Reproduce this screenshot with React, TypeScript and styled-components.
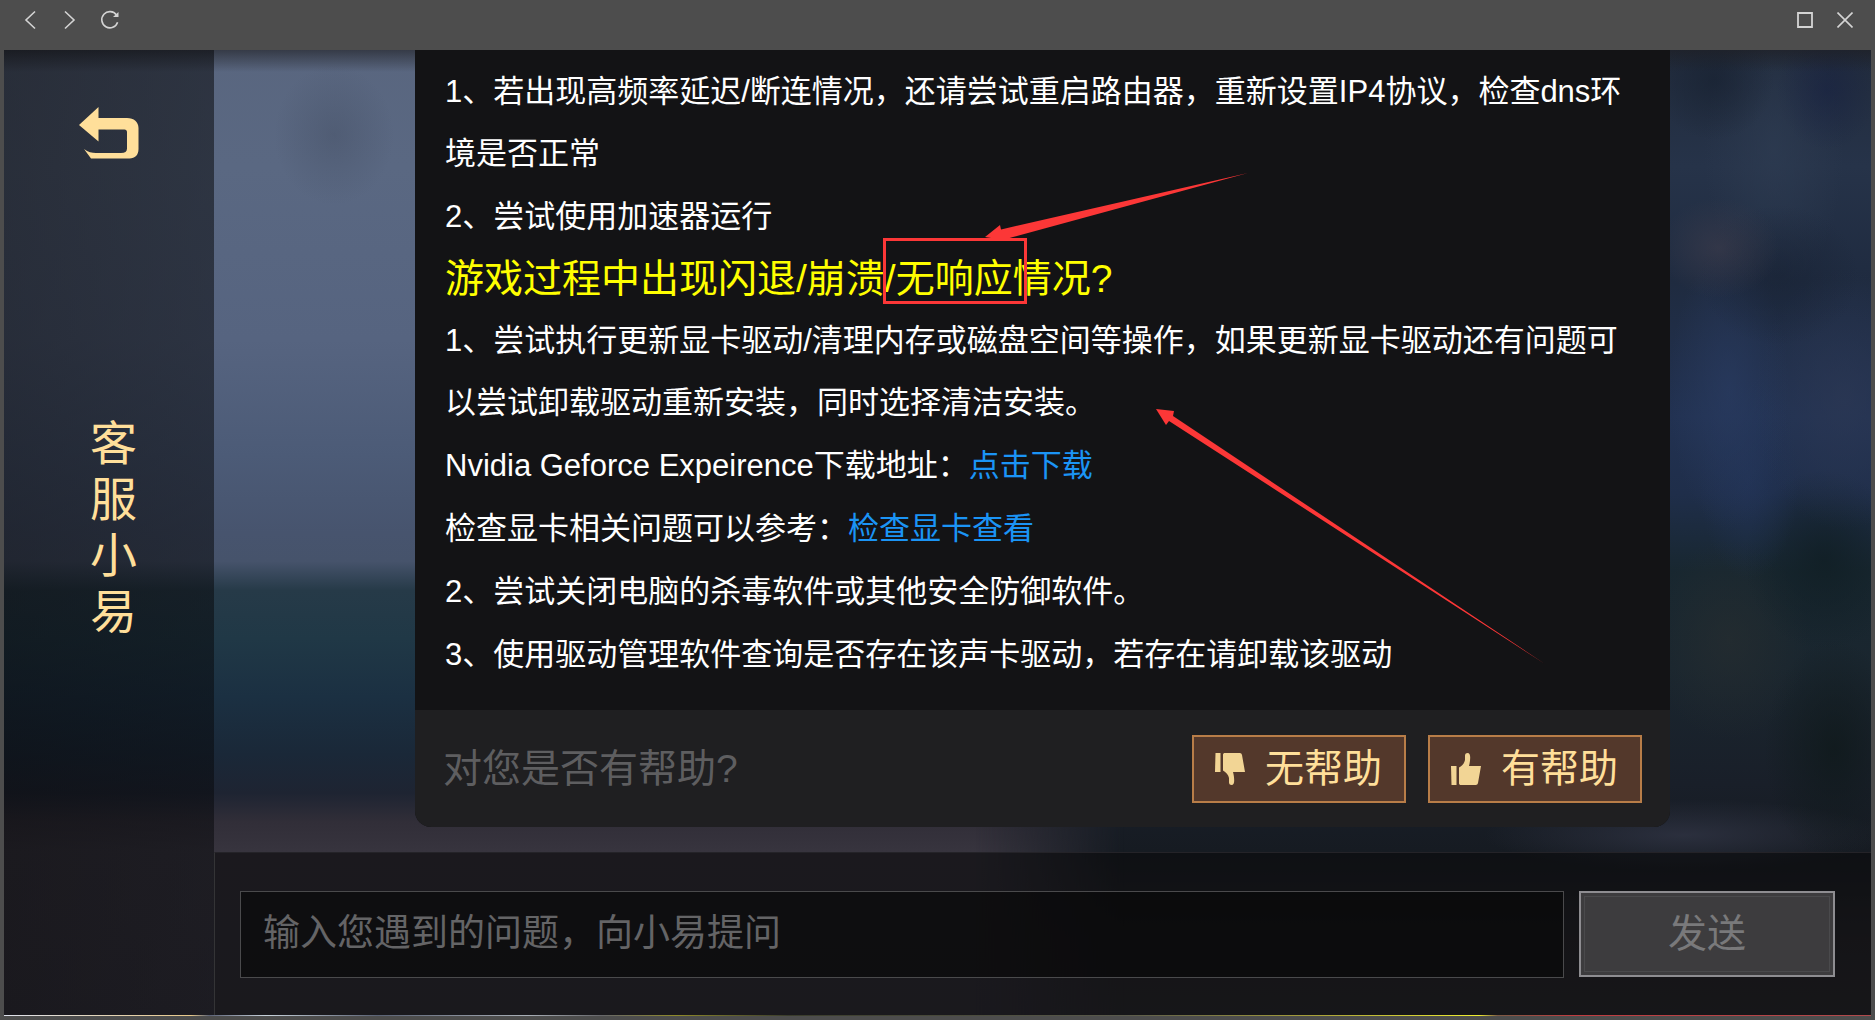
import React, { useState } from "react";
import styled, { createGlobalStyle } from "styled-components";

const GlobalStyle = createGlobalStyle`
  *, *::before, *::after { box-sizing: border-box; }
  body {
    margin: 0;
    background: #4d4d4d;
    font-family: "Liberation Sans", "Noto Sans CJK SC", sans-serif;
  }
  button, input { font-family: inherit; }
`;

const Window = styled.div`
  display: flex;
  flex-direction: column;
  height: 100vh;
  padding: 0 4px 4px;
  background: #4d4d4d;
`;

const TitleBar = styled.header`
  display: flex;
  flex: none;
  align-items: flex-start;
  justify-content: space-between;
  height: 50px;
  padding: 4px 10px 0 10px;
`;

const TitleGroup = styled.div`
  display: flex;
  gap: 8px;
`;

const TitleButton = styled.button`
  display: grid;
  place-items: center;
  width: 32px;
  height: 32px;
  padding: 0;
  border: 0;
  background: none;
  color: #d4d4d4;
  cursor: pointer;
`;

const Scene = styled.div`
  position: relative;
  display: flex;
  flex: 1;
  min-height: 0;
  isolation: isolate;
  background: linear-gradient(
    180deg,
    #212b3c 0,
    #263349 12%,
    #1f2b40 24%,
    #223252 38%,
    #1f2e4a 46%,
    #182730 54%,
    #1a262f 64%,
    #191f29 76%,
    #161b22 83%,
    #28272c 92%,
    #2c2b30 100%
  );

  &::before {
    content: "";
    position: absolute;
    inset: 0;
    z-index: -2;
    background: linear-gradient(
      180deg,
      #59667f 0,
      #5a6882 12%,
      #566480 30%,
      #4c5b77 42%,
      #47546e 50%,
      #46536b 53%,
      #263a48 56%,
      #203846 61%,
      #1b3042 67%,
      #1a2838 73%,
      #1e2432 77%,
      #312e38 80%,
      #37343e 83%,
      #35323c 100%
    );
    mask-image: linear-gradient(90deg, #000 0, #000 52%, transparent 60%);
  }

  &::after {
    content: "";
    position: absolute;
    inset: 0;
    z-index: -1;
    background:
      linear-gradient(180deg, rgba(30, 30, 34, 0.6) 0, rgba(30, 30, 34, 0) 22px),
      radial-gradient(ellipse 60px 70px at 330px 85px, rgba(62, 72, 92, 0.35), transparent),
      radial-gradient(ellipse 60px 50px at 1715px 198px, rgba(60, 60, 76, 0.65), transparent),
      radial-gradient(ellipse 80px 70px at 1775px 225px, rgba(24, 34, 52, 0.6), transparent),
      radial-gradient(ellipse 50px 60px at 1823px 40px, rgba(24, 34, 66, 0.6), transparent),
      radial-gradient(ellipse 60px 60px at 1710px 30px, rgba(24, 34, 50, 0.7), transparent),
      radial-gradient(ellipse 70px 140px at 1770px 100px, rgba(46, 60, 82, 0.7), transparent),
      radial-gradient(ellipse 60px 140px at 1725px 340px, rgba(42, 60, 98, 0.65), transparent),
      radial-gradient(ellipse 90px 130px at 1840px 350px, rgba(44, 56, 84, 0.7), transparent),
      radial-gradient(ellipse 50px 100px at 1745px 430px, rgba(34, 52, 88, 0.65), transparent),
      radial-gradient(ellipse 80px 90px at 1820px 510px, rgba(16, 30, 36, 0.8), transparent),
      radial-gradient(ellipse 80px 100px at 1725px 590px, rgba(38, 45, 48, 0.7), transparent),
      radial-gradient(ellipse 70px 110px at 1830px 700px, rgba(15, 25, 27, 0.8), transparent),
      radial-gradient(ellipse 200px 36px at 1680px 785px, rgba(48, 52, 68, 0.8), transparent);
  }
`;

const Sidebar = styled.aside`
  display: flex;
  flex: none;
  flex-direction: column;
  align-items: center;
  width: 210px;
  padding-top: 56px;
  background: linear-gradient(90deg, rgba(8, 8, 10, 0.6), rgba(8, 9, 12, 0.54));
`;

const BackButton = styled.button`
  width: 62px;
  height: 54px;
  padding: 0;
  border: 0;
  background: none;
  color: #ffdf9a;
  cursor: pointer;

  svg { display: block; }
`;

const AgentName = styled.h1`
  width: 47px;
  margin: 256px 0 0 9px;
  color: #ffdf9a;
  font-size: 47px;
  font-weight: 400;
  line-height: 56px;
  word-break: break-all;
`;

const Main = styled.main`
  display: flex;
  flex: 1;
  flex-direction: column;
  min-width: 0;
`;

const Chat = styled.section`
  display: flex;
  flex: 1;
  flex-direction: column;
  justify-content: flex-end;
  min-height: 0;
  padding: 0 201px 25px;
  overflow: hidden;
`;

const Card = styled.article`
  position: relative;
  flex: none;
  border-radius: 0 0 16px 16px;
  background: #131315;
`;

const CardBody = styled.div`
  display: flex;
  flex-direction: column;
  gap: 1px;
  padding: 11px 30px 24px;
  color: #fff;
  font-size: 31px;
  line-height: 62px;
`;

const Line = styled.p`
  margin: 0;
`;

const Question = styled.h2`
  margin: 0;
  color: #ffff00;
  font-size: 39px;
  font-weight: 400;
  line-height: 60px;
`;

const Link = styled.a`
  color: #1b94f5;
  text-decoration: none;
`;

const CardFooter = styled.footer`
  display: flex;
  align-items: center;
  gap: 22px;
  height: 117px;
  padding: 0 28px;
  border-radius: 0 0 16px 16px;
  background: #1f1f21;
`;

const FooterPrompt = styled.span`
  flex: 1;
  color: #5e5e60;
  font-size: 39px;
  line-height: 56px;
`;

const VoteButton = styled.button`
  display: flex;
  align-items: center;
  gap: 20px;
  height: 68px;
  padding: 0 22px 0 20px;
  border: 2px solid #b87d48;
  background: #53382b;
  color: #ffdf9a;
  font-size: 39px;
  line-height: 56px;
  white-space: nowrap;
  cursor: pointer;

  svg { flex: none; color: #f2d595; }
`;

const Annotations = styled.svg`
  position: absolute;
  top: 0;
  left: 0;
  overflow: visible;
  pointer-events: none;
`;

const Composer = styled.form`
  display: flex;
  flex: none;
  align-items: center;
  gap: 15px;
  height: 163px;
  padding: 0 36px 0 25px;
  border-top: 1px solid #242328;
  border-left: 1px solid #343436;
  background: rgba(10, 10, 12, 0.62);
`;

const QuestionInput = styled.input`
  flex: 1;
  min-width: 0;
  height: 87px;
  padding: 0 22px;
  border: 1px solid #4a4a4c;
  border-radius: 0;
  outline: 0;
  background: rgba(6, 6, 7, 0.6);
  color: #fff;
  font-size: 37px;

  &::placeholder { color: #646466; opacity: 1; }
`;

const SendButton = styled.button`
  flex: none;
  width: 256px;
  height: 86px;
  padding: 0 0 8px;
  border: 2px solid #8e8d91;
  outline: 1px solid #4a4a4c;
  outline-offset: -6px;
  background: #3d3c3e;
  color: #79797b;
  font-size: 39px;
`;

const BottomStrip = styled.div`
  flex: none;
  height: 1px;
  background: linear-gradient(
    90deg,
    #dfe3ee 0,
    #e8c98a 10%,
    #5c6377 11%,
    #c9d3dc 14%,
    #5a6274 20%,
    #aab0b8 28%,
    #66666a 32%,
    #8f8a2a 36%,
    #3a3c2c 42%,
    #5a5a4c 60%,
    #a8a03a 70%,
    #f0ee30 79%,
    #7c5a44 80%,
    #c03c40 84%,
    #b04a4c 100%
  );
`;

const ThumbIcon = ({ down = false }: { down?: boolean }) => (
  <svg width="31" height="32" viewBox="0 0 31 32" fill="currentColor" aria-hidden="true">
    <g transform={down ? "translate(0 32) scale(1 -1)" : undefined}>
      <path d="M1 13h5.500v19H1.500z" />
      <path d="M9 14.500c3-1.500 5.500-4.500 6-7.500V2.500C15 .8 16.300 0 17.500 0c2 0 2.700 2 2.700 4.500 0 3-.5 6-1.200 8.500h12L28 30c-.3 1.300-1 2-2.200 2H11c-1.200 0-2-.6-2-1.500z" />
    </g>
  </svg>
);

export default function App() {
  const [question, setQuestion] = useState("");

  return (
    <>
      <GlobalStyle />
      <Window>
        <TitleBar>
          <TitleGroup>
            <TitleButton type="button" aria-label="后退">
              <svg width="20" height="20" viewBox="0 0 20 20" fill="none" stroke="currentColor" strokeWidth="1.600">
                <path d="M15 1.500 6 10l9 8.500" />
              </svg>
            </TitleButton>
            <TitleButton type="button" aria-label="前进">
              <svg width="20" height="20" viewBox="0 0 20 20" fill="none" stroke="currentColor" strokeWidth="1.600">
                <path d="m5 1.500 9 8.500-9 8.500" />
              </svg>
            </TitleButton>
            <TitleButton type="button" aria-label="刷新">
              <svg width="20" height="20" viewBox="0 0 20 20" fill="none" stroke="currentColor" strokeWidth="1.600">
                <path d="M17.600 12.200A8.100 8.100 0 1 1 16.500 5" />
                <path d="M18.500 2v5h-5.500z" fill="currentColor" stroke="none" />
              </svg>
            </TitleButton>
          </TitleGroup>
          <TitleGroup>
            <TitleButton type="button" aria-label="最大化">
              <svg width="16" height="16" viewBox="0 0 16 16" fill="none" stroke="currentColor" strokeWidth="1.800">
                <path d="M1 1h14v14H1z" />
              </svg>
            </TitleButton>
            <TitleButton type="button" aria-label="关闭">
              <svg width="16" height="16" viewBox="0 0 16 16" fill="none" stroke="currentColor" strokeWidth="1.600">
                <path d="m.5.5 15 15M15.500.5l-15 15" />
              </svg>
            </TitleButton>
          </TitleGroup>
        </TitleBar>

        <Scene>
          <Sidebar>
            <BackButton type="button" aria-label="返回">
              <svg width="62" height="54" viewBox="0 0 62 54" fill="currentColor">
                <path d="M1 19 20.500 1v11H49c7 0 11.500 4 11.500 10v21c0 6-3.500 9.500-9 9.500H13L6 43c4 3 8 4 12 4h25c4 0 6-1.500 6-4.500V26c0-1.500-1-2.500-2.500-2.500h-26v12z" />
              </svg>
            </BackButton>
            <AgentName>客服小易</AgentName>
          </Sidebar>

          <Main>
            <Chat>
              <Card>
                <CardBody>
                  <Line>1、若出现高频率延迟/断连情况，还请尝试重启路由器，重新设置IP4协议，检查dns环境是否正常</Line>
                  <Line>2、尝试使用加速器运行</Line>
                  <Question>游戏过程中出现闪退/崩溃/无响应情况?</Question>
                  <Line>1、尝试执行更新显卡驱动/清理内存或磁盘空间等操作，如果更新显卡驱动还有问题可以尝试卸载驱动重新安装，同时选择清洁安装。</Line>
                  <Line>
                    Nvidia Geforce Expeirence下载地址：<Link href="#download">点击下载</Link>
                  </Line>
                  <Line>
                    检查显卡相关问题可以参考：<Link href="#gpu-check">检查显卡查看</Link>
                  </Line>
                  <Line>2、尝试关闭电脑的杀毒软件或其他安全防御软件。</Line>
                  <Line>3、使用驱动管理软件查询是否存在该声卡驱动，若存在请卸载该驱动</Line>
                </CardBody>
                <CardFooter>
                  <FooterPrompt>对您是否有帮助?</FooterPrompt>
                  <VoteButton type="button">
                    <ThumbIcon down />
                    无帮助
                  </VoteButton>
                  <VoteButton type="button">
                    <ThumbIcon />
                    有帮助
                  </VoteButton>
                </CardFooter>
                <Annotations width="1255" height="660" viewBox="0 0 1255 660" fill="#fc3737" aria-hidden="true">
                  <path d="M570 187l15-12 1 4.500L833 123 598 187l-10 3z" />
                  <path d="M741 359l18 2-1 5L1130 614 754 371l-3 4z" />
                  <rect x="469.500" y="189.500" width="141" height="63" fill="none" stroke="#fc3737" strokeWidth="3" />
                </Annotations>
              </Card>
            </Chat>

            <Composer onSubmit={(event) => event.preventDefault()}>
              <QuestionInput
                type="text"
                aria-label="问题"
                placeholder="输入您遇到的问题，向小易提问"
                value={question}
                onChange={(event) => setQuestion(event.target.value)}
              />
              <SendButton type="submit">发送</SendButton>
            </Composer>
          </Main>
        </Scene>
        <BottomStrip />
      </Window>
    </>
  );
}
